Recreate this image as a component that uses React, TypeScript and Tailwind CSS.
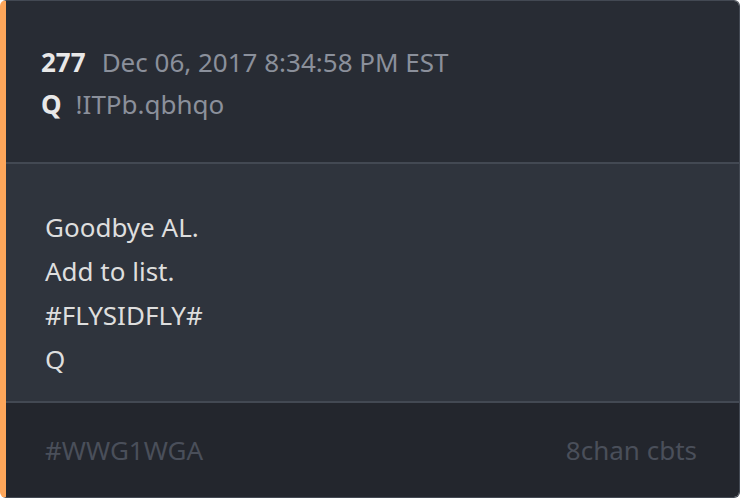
export default function App() {
  return (
    <div className="w-[740px] h-[498px] bg-white" style={{ fontFamily: '"Noto Sans", "Open Sans", sans-serif' }}>
      <div className="h-full flex flex-col overflow-hidden rounded-md border border-[#434953] border-l-[6px] border-l-[#fda65a]">
        <div className="h-[161px] bg-[#282c34] pl-[35px] pt-[43px]">
          <div className="flex items-baseline gap-[16px] text-[26px] leading-[36px]">
            <span className="font-bold text-[#e8e8e8]">277</span>
            <span className="text-[#8b909b]">Dec 06, 2017 8:34:58 PM EST</span>
          </div>
          <div className="flex items-baseline gap-[14px] text-[26px] leading-[36px] mt-[6px]">
            <span className="font-bold text-[#e8e8e8]">Q</span>
            <span className="text-[#8b909b]">!ITPb.qbhqo</span>
          </div>
        </div>
        <div className="h-[241px] bg-[#2f343d] border-t-2 border-b-2 border-[#434953] pl-[39px] pt-[41px] text-[26px] leading-[44px] text-[#dedede]">
          <div>Goodbye AL.</div>
          <div>Add to list.</div>
          <div>#FLYSIDFLY#</div>
          <div>Q</div>
        </div>
        <div className="flex-1 bg-[#23262d] flex items-center justify-between pl-[39px] pr-[42px] text-[26px] text-[#4a4f5a]">
          <span>#WWG1WGA</span>
          <span>8chan cbts</span>
        </div>
      </div>
    </div>
  );
}
